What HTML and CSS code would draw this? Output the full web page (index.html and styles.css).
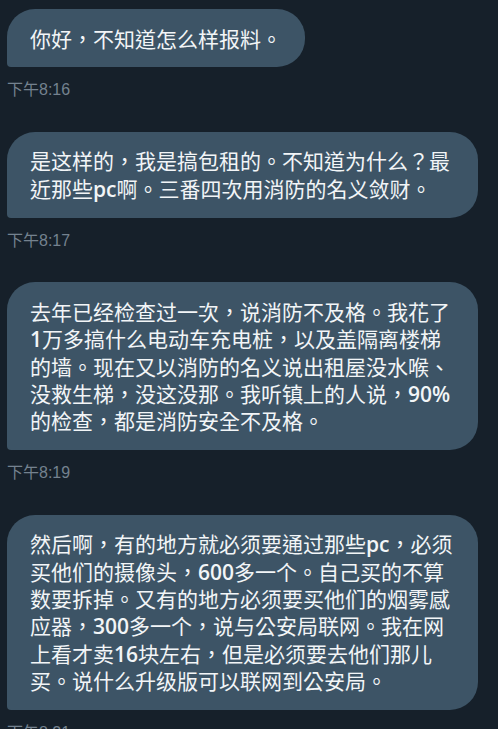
FILE: index.html
```html
<!DOCTYPE html>
<html lang="zh-Hant">
<head>
<meta charset="utf-8">
<title>Messages</title>
<link rel="stylesheet" href="styles.css">
</head>
<body>
<main class="thread">
  <div class="msg">
    <div class="bubble">你好，不知道怎么样报料。</div>
    <div class="time">下午<span class="t">8:16</span></div>
  </div>
  <div class="msg">
    <div class="bubble">是这样的，我是搞包租的。不知道为什么？最近那些<span class="en">pc</span>啊。三番四次用消防的名义敛财。</div>
    <div class="time">下午<span class="t">8:17</span></div>
  </div>
  <div class="msg">
    <div class="bubble">去年已经检查过一次，说消防不及格。我花了<span class="en">1</span>万多搞什么电动车充电桩，以及盖隔离楼梯的墙。现在又以消防的名义说出租屋没水喉、没救生梯，没这没那。我听镇上的人说，<span class="en">90%</span>的检查，都是消防安全不及格。</div>
    <div class="time">下午<span class="t">8:19</span></div>
  </div>
  <div class="msg">
    <div class="bubble">然后啊，有的地方就必须要通过那些<span class="en">pc</span>，必须买他们的摄像头，<span class="en">600</span>多一个。自己买的不算数要拆掉。又有的地方必须要买他们的烟雾感应器，<span class="en">300</span>多一个，说与公安局联网。我在网上看才卖<span class="en">16</span>块左右，但是必须要去他们那儿买。说什么升级版可以联网到公安局。</div>
    <div class="time">下午<span class="t">8:21</span></div>
  </div>
</main>
</body>
</html>
```

FILE: styles.css
```css
html, body {
  margin: 0;
  padding: 0;
  background: #16202a;
}
body {
  font-family: "Noto Sans CJK TC", "Noto Sans CJK SC", sans-serif;
  overflow: hidden;
}
.thread {
  display: flex;
  flex-direction: column;
  gap: 33.5px;
  padding: 9px 0 0 7px;
}
.msg {
  display: flex;
  flex-direction: column;
  align-items: flex-start;
  gap: 11px;
}
.bubble {
  max-width: 471px;
  box-sizing: border-box;
  padding: 15.5px 23px;
  background: #3d5466;
  color: #f2f5f7;
  font-size: 21px;
  line-height: 27.4px;
  border-radius: 28px 28px 28px 4px;
}
.en {
  font-family: "Open Sans", "Liberation Sans", sans-serif;
  font-weight: 600;
  line-height: 1;
}
.time {
  font-size: 16px;
  line-height: 20px;
  color: #74828f;
}
.time .t {
  font-family: "Liberation Sans", sans-serif;
  line-height: 1;
}
```
